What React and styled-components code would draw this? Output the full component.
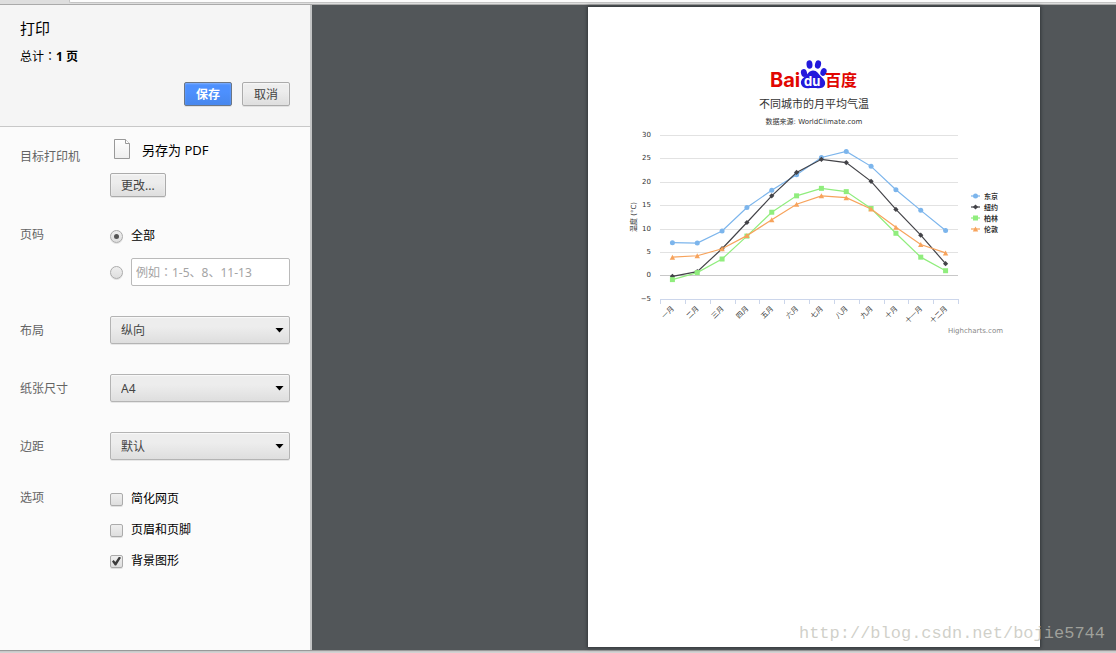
import React from 'react';
import styled, { createGlobalStyle } from 'styled-components';

const Global = createGlobalStyle`
  *, *::before, *::after { box-sizing: border-box; }
  html, body, #root { height: 100%; }
  body {
    margin: 0;
    background: #d2d2d2;
    font: 12px/16px "Noto Sans", "Noto Sans CJK SC", sans-serif;
    color: #000;
  }
  button, input, select { font: inherit; }
`;

const Frame = styled.div`
  display: flex;
  flex-direction: column;
  min-height: 100%;
  overflow: hidden;
`;

const TabStrip = styled.div`
  flex: none;
  height: 5px;
  padding-left: 69px;
  background: #dedede;
  border-bottom: 1px solid #aaa;
`;

const Toolbar = styled.div`
  height: 3px;
  background: #fcfcfc;
  border-bottom: 1px solid #c4c4c4;
  border-left: 1px solid #c4c4c4;
  border-bottom-left-radius: 2px;
`;

const Dialog = styled.main`
  flex: 1;
  display: flex;
  margin-bottom: 3px;
  box-shadow: 0 1px 1px #999;
`;

const Sidebar = styled.form`
  flex: none;
  width: 312px;
  background: #fbfbfb;
  border-right: 2px solid #c3c4c5;
`;

const Header = styled.header`
  padding: 13px 20px 20px;
  background: #f5f5f5;
  border-bottom: 1px solid #c8c8c8;
`;

const Title = styled.h1`
  margin: 0 0 11px;
  font-size: 15px;
  line-height: 20px;
  font-weight: 400;
`;

const Total = styled.p`
  margin: 0;
  font-family: "Noto Sans", "Noto Sans CJK JP", sans-serif;
`;

const Actions = styled.div`
  display: flex;
  justify-content: flex-end;
  gap: 10px;
  margin-top: 17px;
`;

const Button = styled.button`
  height: 24px;
  min-width: 48px;
  padding: 1px 10px 0;
  border: 1px solid ${(p) => (p.$primary ? '#6b7685' : '#ababab')};
  border-radius: 2px;
  background: ${(p) => (p.$primary
    ? 'linear-gradient(#4d90fe 40%, #4787ed)'
    : 'linear-gradient(#ededed 38%, #dedede)')};
  box-shadow: 0 1px 0 rgba(0, 0, 0, 0.08), inset 0 1px 2px rgba(255, 255, 255, ${(p) => (p.$primary ? 0.3 : 0.7)});
  color: ${(p) => (p.$primary ? '#fff' : '#444')};
  font-weight: ${(p) => (p.$primary ? 700 : 400)};
  line-height: 20px;
`;

const Settings = styled.div`
  display: flex;
  flex-direction: column;
  gap: 30px;
  padding: 10px 20px;
`;

const Row = styled.section`
  display: grid;
  grid-template-columns: 90px minmax(0, 1fr);
`;

const RowName = styled.label`
  padding-top: ${(p) => p.$top}px;
  color: #646464;
`;

const Stack = styled.div`
  display: flex;
  flex-direction: column;
  align-items: ${(p) => (p.$start ? 'flex-start' : 'stretch')};
  gap: ${(p) => p.$gap}px;
`;

const Destination = styled.div`
  display: flex;
  align-items: center;
  gap: 9px;
  height: 26px;
  font-size: 13px;
`;

const Choice = styled.label`
  display: flex;
  align-items: center;
  gap: 8px;
  line-height: 18px;
`;

const Tick = styled.input`
  appearance: none;
  flex: none;
  display: grid;
  place-items: center;
  width: 13px;
  height: 13px;
  margin: 0;
  border: 1px solid #ababab;
  border-radius: ${(p) => (p.type === 'radio' ? '50%' : '2px')};
  background: linear-gradient(#efefef, #dedede);
  box-shadow: 0 1px 0 rgba(0, 0, 0, 0.1);

  &[type='radio']:checked::before {
    content: '';
    width: 5px;
    height: 5px;
    border-radius: 50%;
    background: #555;
  }

  &[type='checkbox']:checked::before {
    content: '';
    width: 9px;
    height: 9px;
    background: #3c3c3c;
    clip-path: polygon(0 56%, 18% 40%, 38% 60%, 78% 0, 100% 14%, 46% 100%, 32% 100%);
  }
`;

const PageRange = styled.input`
  flex: 1;
  min-width: 0;
  height: 28px;
  padding: 0 4px;
  border: 1px solid #bababa;
  border-radius: 2px;
  background: #fff;
  font-family: "Noto Sans", "Noto Sans CJK JP", sans-serif;
  &::placeholder { color: #a4a4a4; opacity: 1; }
`;

const SelectBox = styled.div`
  display: grid;
  align-items: center;
  > * { grid-area: 1 / 1; }
`;

const Select = styled.select`
  appearance: none;
  width: 100%;
  height: 28px;
  padding: 1px 24px 0 10px;
  border: 1px solid #b4b4b4;
  border-radius: 2px;
  background: linear-gradient(#ededed 38%, #dedede);
  box-shadow: 0 1px 0 rgba(0, 0, 0, 0.08), inset 0 1px 1px rgba(255, 255, 255, 0.7);
  color: #444;
`;

const Arrow = styled.span`
  justify-self: end;
  margin-right: 6px;
  width: 9px;
  height: 5px;
  background: #000;
  clip-path: polygon(0 0, 100% 0, 50% 100%);
  pointer-events: none;
`;

const Preview = styled.section`
  position: relative;
  flex: 1;
  display: grid;
  grid-template-columns: 276fr 452px 76fr;
  padding: 2px 0 3px;
  background: #525659;
`;

const Sheet = styled.article`
  grid-column: 2;
  display: flex;
  flex-direction: column;
  align-items: center;
  padding-top: 51px;
  background: #fff;
  box-shadow: 0 0 3px 1px #33373a;
`;

const ChartTitle = styled.h2`
  margin: 0;
  color: #333;
  font-size: 11px;
  line-height: 16px;
  font-weight: 400;
`;

const ChartSource = styled.p`
  margin: 2px 0 0;
  color: #333;
  font: 7px/16px "DejaVu Sans", "Noto Sans CJK SC", sans-serif;
`;

const ChartSvg = styled.svg`
  display: block;
  font: 7px "DejaVu Sans", "Noto Sans CJK SC", sans-serif;
  fill: #333;
`;

const Watermark = styled.p`
  position: absolute;
  right: 11px;
  bottom: 4px;
  margin: 0;
  color: rgba(190, 190, 180, 0.72);
  font: 17px/24px "Liberation Mono", monospace;
`;

const FileIcon = () => (
  <svg width="23" height="24" viewBox="0 0 23 24" aria-hidden="true">
    <defs>
      <linearGradient id="paper" x1="0" y1="0" x2="0" y2="1">
        <stop offset="0" stopColor="#fff" />
        <stop offset="1" stopColor="#eee" />
      </linearGradient>
    </defs>
    <path d="M4.500 1.500H15.500L19.500 5.500V20.500H4.500Z" fill="url(#paper)" stroke="#999" />
    <path d="M15.500 1.500V5.500H19.500" fill="#fff" stroke="#999" />
  </svg>
);

const logoText = { fontFamily: 'Inter, "Noto Sans CJK SC", sans-serif', fontWeight: 700 };

const BaiduLogo = () => (
  <svg width="90" height="38" viewBox="0 0 90 38" role="img" aria-label="Baidu 百度">
    <text x="1" y="29" fontSize="20" fill="#e10601" {...logoText}>Bai</text>
    <g fill="#2319dc">
      <ellipse cx="35" cy="15" rx="3" ry="4" transform="rotate(-15 35 15)" />
      <ellipse cx="40.500" cy="6.500" rx="3" ry="4.200" transform="rotate(-5 40.500 6.500)" />
      <ellipse cx="49" cy="6.500" rx="3" ry="4.200" transform="rotate(14 49 6.500)" />
      <ellipse cx="54.500" cy="14" rx="3" ry="4" transform="rotate(20 54.500 14)" />
      <path d="M44 12.500c-4 0-5.500 4-8 6-3.500 2.500-5 5-3.500 8.500 1.500 3.500 5.500 3.500 8.500 3h6c4 .8 8 0 9-3.500.8-3.500-1.500-5.500-4-8-2.500-2.500-4-6-8-6Z" />
    </g>
    <text x="35" y="28" fontSize="13" fill="#fff" {...logoText}>du</text>
    <text x="56" y="28" fontSize="16" fill="#e10601" {...logoText}>百度</text>
  </svg>
);

const months = ['一月', '二月', '三月', '四月', '五月', '六月', '七月', '八月', '九月', '十月', '十一月', '十二月'];

const series = [
  { name: '东京', color: '#7cb5ec', shape: 'circle', data: [7, 6.9, 9.5, 14.5, 18.2, 21.5, 25.2, 26.5, 23.3, 18.3, 13.9, 9.6] },
  { name: '纽约', color: '#434348', shape: 'diamond', data: [-0.2, 0.8, 5.7, 11.3, 17, 22, 24.8, 24.1, 20.1, 14.1, 8.6, 2.5] },
  { name: '柏林', color: '#90ed7d', shape: 'square', data: [-0.9, 0.6, 3.5, 8.4, 13.5, 17, 18.6, 17.9, 14.3, 9, 3.9, 1] },
  { name: '伦敦', color: '#f7a35c', shape: 'triangle', data: [3.9, 4.2, 5.7, 8.5, 11.9, 15.2, 17, 16.6, 14.2, 10.3, 6.6, 4.8] },
];

const LEFT = 72;
const RIGHT = 370;
const TOP = 5;
const UNIT = 4.68;
const STEP = (RIGHT - LEFT) / 12;
const yOf = (v) => TOP + (30 - v) * UNIT;
const xOf = (i) => LEFT + STEP * (i + 0.5);

const Marker = ({ shape, x, y, color }) => {
  if (shape === 'circle') return <circle cx={x} cy={y} r="2.500" fill={color} />;
  if (shape === 'square') return <rect x={x - 2.5} y={y - 2.5} width="5" height="5" fill={color} />;
  const d = shape === 'diamond'
    ? `M${x} ${y - 2.6}l2.600 2.600-2.600 2.600-2.600-2.600Z`
    : `M${x} ${y - 2.5}l2.700 5h-5.400Z`;
  return <path d={d} fill={color} />;
};

const Chart = () => (
  <ChartSvg width="452" height="210" viewBox="0 0 452 210" role="img" aria-label="不同城市的月平均气温">
    {[30, 25, 20, 15, 10, 5, 0, -5].map((v) => (
      <g key={v}>
        {v > -5 && <path d={`M${LEFT} ${Math.round(yOf(v)) + 0.5}H${RIGHT}`} stroke={v === 0 ? '#c8c8c8' : '#e2e2e2'} />}
        <text x="63" y={yOf(v) + 2} textAnchor="end">{v < 0 ? `−${-v}` : v}</text>
      </g>
    ))}
    <path
      d={`M${LEFT} 169.500H${RIGHT + 1}${months.concat('').map((_, i) => `M${Math.round(LEFT + STEP * i) + 0.5} 169v5`).join('')}`}
      stroke="#ccd6eb"
      fill="none"
    />
    <text transform="translate(48 87) rotate(-90)" textAnchor="middle">温度 (°C)</text>
    {months.map((m, i) => (
      <text key={m} transform={`translate(${xOf(i) + 2} 179) rotate(-45)`} textAnchor="end">{m}</text>
    ))}
    {series.map((s, n) => (
      <g key={s.name}>
        <polyline
          points={s.data.map((v, i) => `${xOf(i)},${yOf(v)}`).join(' ')}
          fill="none"
          stroke={s.color}
          strokeWidth="1.200"
        />
        {s.data.map((v, i) => <Marker key={i} shape={s.shape} x={xOf(i)} y={yOf(v)} color={s.color} />)}
        <path d={`M383 ${66 + n * 11}h9`} stroke={s.color} strokeWidth="1.200" />
        <Marker shape={s.shape} x={387.5} y={66 + n * 11} color={s.color} />
        <text x="396" y={69 + n * 11} fontWeight="700">{s.name}</text>
      </g>
    ))}
    <text x="415" y="203" textAnchor="end" fill="#888">Highcharts.com</text>
  </ChartSvg>
);

const selects = [
  { id: 'layout', name: '布局', options: ['纵向', '横向'] },
  { id: 'paper-size', name: '纸张尺寸', options: ['A4', 'A3', 'Letter'] },
  { id: 'margins', name: '边距', options: ['默认', '无', '最小值'] },
];

const options = [
  { name: '简化网页', on: false },
  { name: '页眉和页脚', on: false },
  { name: '背景图形', on: true },
];

export default function App() {
  return (
    <Frame>
      <Global />
      <TabStrip><Toolbar /></TabStrip>
      <Dialog>
        <Sidebar onSubmit={(e) => e.preventDefault()}>
          <Header>
            <Title>打印</Title>
            <Total>总计：<b>1 页</b></Total>
            <Actions>
              <Button type="submit" $primary>保存</Button>
              <Button type="button">取消</Button>
            </Actions>
          </Header>
          <Settings>
            <Row>
              <RowName as="span" $top={12}>目标打印机</RowName>
              <Stack $gap={10} $start>
                <Destination><FileIcon />另存为 PDF</Destination>
                <Button type="button">更改...</Button>
              </Stack>
            </Row>
            <Row>
              <RowName as="span" $top={0}>页码</RowName>
              <Stack $gap={13}>
                <Choice><Tick type="radio" name="pages" defaultChecked />全部</Choice>
                <Choice as="div">
                  <Tick type="radio" name="pages" aria-label="页码范围" />
                  <PageRange aria-label="页码范围" placeholder="例如：1-5、8、11-13" />
                </Choice>
              </Stack>
            </Row>
            {selects.map((s) => (
              <Row key={s.id}>
                <RowName htmlFor={s.id} $top={7}>{s.name}</RowName>
                <SelectBox>
                  <Select id={s.id}>
                    {s.options.map((o) => <option key={o}>{o}</option>)}
                  </Select>
                  <Arrow />
                </SelectBox>
              </Row>
            ))}
            <Row>
              <RowName as="span" $top={0}>选项</RowName>
              <Stack $gap={13}>
                {options.map((o) => (
                  <Choice key={o.name}><Tick type="checkbox" defaultChecked={o.on} />{o.name}</Choice>
                ))}
              </Stack>
            </Row>
          </Settings>
        </Sidebar>
        <Preview>
          <Sheet>
            <BaiduLogo />
            <ChartTitle>不同城市的月平均气温</ChartTitle>
            <ChartSource>数据来源: WorldClimate.com</ChartSource>
            <Chart />
          </Sheet>
          <Watermark>http://blog.csdn.net/bojie5744</Watermark>
        </Preview>
      </Dialog>
    </Frame>
  );
}
